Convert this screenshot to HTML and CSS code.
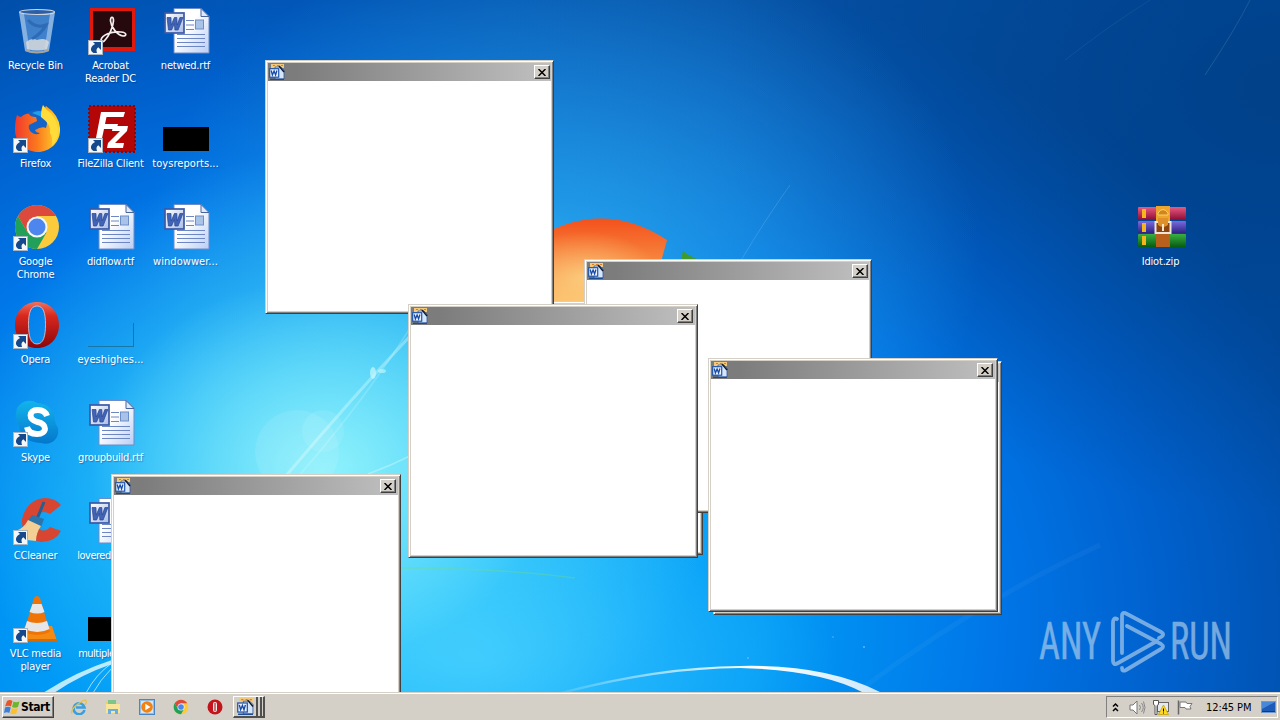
FILE: index.html
```html
<!DOCTYPE html>
<html lang="en">
<head>
    <meta charset="UTF-8">
    <meta name="viewport" content="width=device-width, initial-scale=1.0">
    <title>Desktop</title>
    <link rel="stylesheet" href="styles.css">
</head>
<body>
    <!-- shared icons -->
    <svg class="defs" width="0" height="0">
        <defs>
            <linearGradient id="paper" x1="0" y1="0" x2="1" y2="1">
                <stop offset="0.4" stop-color="#ffffff"/>
                <stop offset="1" stop-color="#b9cdf3"/>
            </linearGradient>
            <linearGradient id="wbox" x1="0" y1="0" x2="1" y2="1">
                <stop offset="0" stop-color="#ffffff"/>
                <stop offset="1" stop-color="#a9bde8"/>
            </linearGradient>
            <linearGradient id="operaRed" x1="0" y1="0" x2="0" y2="1">
                <stop offset="0" stop-color="#f0705c"/>
                <stop offset="0.3" stop-color="#d8281e"/>
                <stop offset="1" stop-color="#8c060a"/>
            </linearGradient>
        </defs>
        <symbol id="shortcut" viewBox="0 0 15 15">
            <rect x="0.5" y="0.5" width="14" height="14" fill="#f4f6f8" stroke="#a9b4c0"/>
            <path d="M5 2h8v8l-2.700-2.700c-1.800 1.200-2.300 2.900-1.300 5.700H5.500C1.500 10.500 2.500 6.500 7 4z" fill="#16498c"/>
        </symbol>
        <symbol id="word-doc" viewBox="0 0 48 48">
            <path d="M11 1.500h27l8 8V46H11z" fill="url(#paper)" stroke="#6d8ccb"/>
            <path d="M38 1.500v8h8z" fill="#dfe9fb" stroke="#4a659c"/>
            <path d="M23 13.500h8M23 18h8M23 22.500h8M14 27.500h28M14 31.500h28M14 35.500h28M14 39.500h28" stroke="#6c87c4" stroke-width="1.200"/>
            <rect x="32.500" y="13" width="8" height="9" fill="#a9c3e8" stroke="#6d8fc8"/>
            <rect x="2" y="6" width="19" height="20" fill="url(#wbox)" stroke="#3a59a6" stroke-width="1.700"/>
            <path d="M4 10.500h4l.2 7.500 3.200-7.500h2.400l.4 7.500 2.700-7.500h3l-4.800 12.500h-3.200l-.5-6.500-2.800 6.500H5.500z" fill="#4164b8" stroke="#27468f" stroke-width=".7"/>
        </symbol>
        <symbol id="word-small" viewBox="0 0 16 16">
            <path d="M2 0h13v4H2z" fill="#f3c878"/>
            <path d="M4 1.500h2M8 1.500h2M12 1.500h2" stroke="#e07c1a"/>
            <path d="M6 3h6l3 3v9H6z" fill="#d5e6fb" stroke="#33599f" stroke-width=".8"/>
            <path d="M10 2l5 6" stroke="#101828" stroke-width="1.400"/>
            <path d="M1 15.300h14" stroke="#1d4c93" stroke-width="1.400"/>
            <rect x="0.700" y="4.700" width="9" height="8.500" fill="#eef4ff" stroke="#2255a8" stroke-width="1.200"/>
            <path d="M2.200 6.500l1.200 4.500 1.700-4 1.500 4 1.300-4.500" fill="none" stroke="#164aa5" stroke-width="1.300"/>
        </symbol>
        <symbol id="chrome" viewBox="0 0 48 48">
            <circle cx="24" cy="24" r="22" fill="#fbcb3c"/>
            <path d="M4.950 13A22 22 0 0 1 43.050 13H24L14.500 29.500z" fill="#dc4a3d"/>
            <path d="M4.950 13A22 22 0 0 0 24 46L33.500 29.500 14.500 29.500z" fill="#21a05a"/>
            <circle cx="24" cy="24" r="10.500" fill="#f4f6f8"/>
            <circle cx="24" cy="24" r="8.500" fill="#4c86ee"/>
        </symbol>
        <symbol id="opera" viewBox="0 0 48 48">
            <path fill-rule="evenodd" d="M24 1C11 1 2 11 2 24s9 23 22 23 22-10 22-23S37 1 24 1zM24 5c6.500 0 8.500 7 8.500 18.500s-2 19.500-8.500 19.500-8.500-8-8.500-19.500 2-18.500 8.500-18.500z" fill="url(#operaRed)"/>
            <path d="M24 5c6.500 0 8.500 7 8.500 18.500s-2 19.500-8.500 19.500-8.500-8-8.500-19.500 2-18.500 8.500-18.500z" fill="none" stroke="#f3c9c4" stroke-width=".8"/>
        </symbol>
    </svg>

    <div class="desktop">
        <svg class="wallpaper" width="1280" height="720" viewBox="0 0 1280 720">
            <defs>
                <linearGradient id="flagRed" x1="0" y1="0" x2="0" y2="1">
                    <stop offset="0" stop-color="#f4511c"/>
                    <stop offset="0.450" stop-color="#f6803a"/>
                    <stop offset="1" stop-color="#fbb863"/>
                </linearGradient>
                <linearGradient id="wave" x1="0" y1="0" x2="1" y2="0">
                    <stop offset="0" stop-color="#fff" stop-opacity="0.100"/>
                    <stop offset="0.600" stop-color="#fff"/>
                    <stop offset="1" stop-color="#fff" stop-opacity="0.800"/>
                </linearGradient>
                <radialGradient id="flagGlow" cx="0.400" cy="0.700" r="0.550">
                    <stop offset="0" stop-color="#fff0a0" stop-opacity="0.550"/>
                    <stop offset="1" stop-color="#fff0a0" stop-opacity="0"/>
                </radialGradient>
            </defs>
            <path d="M530 242Q600 196 667 240L650 302H530z" fill="url(#flagRed)"/>
            <path d="M530 242Q600 196 667 240L650 302H530z" fill="url(#flagGlow)"/>
            <path d="M683 251q6 5 16 9h-18z" fill="#3f9b2f"/>
            <g fill="none" stroke="#e8ffff">
                <path d="M285 477Q350 400 412 334" stroke-width="3" opacity=".35"/>
                <path d="M298 477Q365 400 412 325" stroke-width="1.500" opacity=".2"/>
                <path d="M368 474Q390 466 412 455" stroke-width="1.500" opacity=".35"/>
                <path d="M740 262Q765 220 790 185" opacity=".14"/>
                <path d="M1205 75Q1235 30 1250 0" opacity=".12"/>
                <path d="M1065 60Q1110 25 1150 0" opacity=".06"/>
                <path d="M860 690Q980 600 1100 545" stroke-width="5" opacity=".04"/>
            </g>
            <circle cx="297" cy="452" r="42" fill="#fff" opacity=".09"/>
            <circle cx="323" cy="431" r="21" fill="#fff" opacity=".09"/>
            <ellipse cx="373" cy="373" rx="3" ry="6" fill="#c8f8ff" opacity=".7"/>
            <ellipse cx="382" cy="371" rx="4" ry="2" fill="#c8f8ff" opacity=".6"/>
            <path d="M400 568Q500 568 575 578" fill="none" stroke="#6fe07a" stroke-width="1.500" opacity=".35"/>
            <path d="M560 692Q660 666 740 666Q825 664 880 692H862Q820 670 740 668Q660 669 570 692z" fill="url(#wave)"/>
            <path d="M43 693Q75 672 112 660V664Q80 675 54 693z" fill="#e9fdff" opacity=".8"/>
            <path d="M86 693Q96 674 112 663M93 693Q100 680 112 668" fill="none" stroke="#d9fbff" opacity=".7"/>
            <circle cx="864" cy="647" r="1" fill="#5fb4ff"/>
            <circle cx="748" cy="658" r="1" fill="#5fb4ff"/>
            <circle cx="833" cy="637" r=".8" fill="#5fb4ff"/>
        </svg>

        <div class="icons">
            <div class="icon">
                <svg class="pic" viewBox="0 0 48 48">
                    <path d="M6 5h36l-6 38q-12 5-24 0z" fill="#7eaee4" fill-opacity=".5"/>
                    <path d="M6 5l6 39q3 1 5 1.500L11 7zM42 5l-6 39q-2 1-5 1.500L37 7z" fill="#dcecfa" fill-opacity=".45"/>
                    <path d="M13 35q6-5 11-2 8-3 12 2l-2 7q-9 3-20 0z" fill="#d9dbdc" fill-opacity=".85"/>
                    <path d="M15 13q8 9 18 5-4 8-14 14" fill="none" stroke="#205aa6" stroke-width="3" opacity=".55"/>
                    <ellipse cx="24" cy="5" rx="17.500" ry="2.500" fill="#2c5fa8" stroke="#d0d6dc" stroke-width="1.200"/>
                    <path d="M12 42q12 5 24 0v2q-12 5-24 0z" fill="#a7a49a"/>
                </svg>
                <span>Recycle Bin</span>
            </div>
            <div class="icon">
                <svg class="pic" viewBox="0 0 48 48">
                    <rect x="2" y="1" width="45" height="43" fill="#e2180d"/>
                    <rect x="5" y="4" width="39" height="36" fill="#26090c"/>
                    <path d="M13 33c1-5 10-9 20-8 6 .5 6 4 2 4-6-1-12-9-12.500-15-.2-5 3.200-5 3 0-.5 7-5 15-8 18.500-2 3-5 3.500-4.500.5z" fill="none" stroke="#f4eeee" stroke-width="1.700"/>
                </svg>
                <svg class="arrow"><use href="#shortcut"/></svg>
                <span>Acrobat<br>Reader DC</span>
            </div>
            <div class="icon">
                <svg class="pic"><use href="#word-doc"/></svg>
                <span>netwed.rtf</span>
            </div>

            <div class="icon">
                <svg class="pic" viewBox="0 0 48 48">
                    <defs>
                        <linearGradient id="fox" x1="0" y1="0" x2="1" y2="0">
                            <stop offset="0" stop-color="#f1392d"/>
                            <stop offset="0.500" stop-color="#fb7a1e"/>
                            <stop offset="1" stop-color="#fedb2f"/>
                        </linearGradient>
                    </defs>
                    <circle cx="24" cy="22" r="17" fill="#1463c8"/>
                    <path d="M19 8q8-4 13 0l1 6q-6-3-14-6z" fill="#20a0e8"/>
                    <path d="M4 10q2 2 4 2 5-4 8-3 1 3 7 3l1 4-8 4q-1 4 2 7 5 4 9 1-4 0-5-3 7-4 11-2 3-9-2-15 1-6 2-7 13 9 14 22c1 15-11 24-22 24S2 38 2 25Q2 16 4 10z" fill="url(#fox)"/>
                    <path d="M28 12q0-8 2-12 3 5 8 8 7 9 7 18 0 9-6 15 1-9-2-13 2-8-9-16z" fill="#ffdc3a"/>
                </svg>
                <svg class="arrow"><use href="#shortcut"/></svg>
                <span>Firefox</span>
            </div>
            <div class="icon">
                <svg class="pic" viewBox="0 0 48 48">
                    <rect x="1" y="1" width="46" height="46" fill="#b30606" stroke="#8c0508" stroke-width="2" stroke-dasharray="2 2"/>
                    <path d="M13 7h24l-1.500 5H18.500l-1.500 7h13l-1.500 5H16l-3 14H7z" fill="#fff"/>
                    <path d="M25 21h15l-1 5-12 12h9l-1 5H19l1-5 12-12h-8z" fill="#fff"/>
                </svg>
                <svg class="arrow"><use href="#shortcut"/></svg>
                <span>FileZilla Client</span>
            </div>
            <div class="icon">
                <div class="pic thumb"></div>
                <span class="long">toysreports...</span>
            </div>

            <div class="icon">
                <svg class="pic"><use href="#chrome"/></svg>
                <svg class="arrow"><use href="#shortcut"/></svg>
                <span>Google<br>Chrome</span>
            </div>
            <div class="icon">
                <svg class="pic"><use href="#word-doc"/></svg>
                <span>didflow.rtf</span>
            </div>
            <div class="icon">
                <svg class="pic"><use href="#word-doc"/></svg>
                <span class="long">windowwer...</span>
            </div>

            <div class="icon">
                <svg class="pic"><use href="#opera"/></svg>
                <svg class="arrow"><use href="#shortcut"/></svg>
                <span>Opera</span>
            </div>
            <div class="icon">
                <div class="pic thumb empty"></div>
                <span class="long">eyeshighes...</span>
            </div>
            <div class="icon blank"></div>

            <div class="icon">
                <svg class="pic" viewBox="0 0 48 48">
                    <defs>
                        <linearGradient id="skype" x1="0" y1="0" x2="0" y2="1">
                            <stop offset="0" stop-color="#12b4ec"/>
                            <stop offset="1" stop-color="#0477cc"/>
                        </linearGradient>
                    </defs>
                    <path d="M14 2q6-1 10 2 16 1 18 17 0 4 3 8c2 11-7 18-17 15Q8 43 6 27 1 18 4 9 8 3 14 2z" fill="url(#skype)"/>
                    <path d="M34 17q-2-6-9.500-6c-9 0-9.500 10 0 12 10 2 10 12-.500 12Q15.500 35 14 28" fill="none" stroke="#fff" stroke-width="6"/>
                </svg>
                <svg class="arrow"><use href="#shortcut"/></svg>
                <span>Skype</span>
            </div>
            <div class="icon">
                <svg class="pic"><use href="#word-doc"/></svg>
                <span>groupbuild.rtf</span>
            </div>
            <div class="icon blank"></div>

            <div class="icon">
                <svg class="pic" viewBox="0 0 48 48">
                    <path d="M48 8L37 17q-8-5-13 2-3 9 4 14 5 2 9-3l11 4Q42 45 28 45 8 40 9 22 14 2 32 1q10 0 16 7z" fill="#d84530"/>
                    <path d="M31 5L24 22" stroke="#245f94" stroke-width="3"/>
                    <path d="M19 18l12 4-3 8-13-6z" fill="#2b74ac"/>
                    <path d="M15 23l13 6q-5 7-5 15l-9-1-11-9Q11 31 15 23z" fill="#f3cf95"/>
                </svg>
                <svg class="arrow"><use href="#shortcut"/></svg>
                <span>CCleaner</span>
            </div>
            <div class="icon">
                <svg class="pic"><use href="#word-doc"/></svg>
                <span class="tight">loveredge.rtf</span>
            </div>
            <div class="icon blank"></div>

            <div class="icon">
                <svg class="pic" viewBox="0 0 48 48">
                    <path d="M12 31h27l5 15H8z" fill="#f58a12"/>
                    <path d="M8 44h36v2.500H8z" fill="#d66a04"/>
                    <path d="M21 3q3-4 6 0l10 34q-13 6-26 0z" fill="#ee7408"/>
                    <path d="M19.500 9h9l3 8q-7 3-15 0zM14 26q10 4 20 0l2.500 8q-12 6-25 0z" fill="#e6e6e8"/>
                </svg>
                <svg class="arrow"><use href="#shortcut"/></svg>
                <span>VLC media<br>player</span>
            </div>
            <div class="icon">
                <div class="pic thumb"></div>
                <span class="tight">multiplepa...</span>
            </div>
        </div>

        <div class="icon zip">
            <svg class="pic" viewBox="0 0 48 48">
                <defs>
                    <linearGradient id="bookR" x1="0" y1="0" x2="0" y2="1"><stop offset="0" stop-color="#e85a80"/><stop offset="1" stop-color="#8d0b34"/></linearGradient>
                    <linearGradient id="bookB" x1="0" y1="0" x2="0" y2="1"><stop offset="0" stop-color="#7a6ae0"/><stop offset="1" stop-color="#2e2484"/></linearGradient>
                    <linearGradient id="bookG" x1="0" y1="0" x2="0" y2="1"><stop offset="0" stop-color="#39b040"/><stop offset="1" stop-color="#075c12"/></linearGradient>
                </defs>
                <rect y="4" width="48" height="13" rx="1" fill="url(#bookR)"/>
                <rect y="18" width="48" height="12" rx="1" fill="url(#bookB)"/>
                <rect y="31" width="48" height="13" rx="1" fill="url(#bookG)"/>
                <path d="M4 6h4v9H4zM4 20h4v9H4zM4 33h4v9H4z" fill="#f5b51c"/>
                <rect x="18" y="3" width="14" height="41" fill="#b8601c"/>
                <path d="M18 3h14v15H18z" fill="#eda52c"/>
                <path d="M20 10q5-7 10 0v2H20z" fill="#d4841a" stroke="#fbd468"/>
                <rect x="17.500" y="19" width="15" height="11" fill="#8c4412" stroke="#ece5da" stroke-width="2"/>
                <path d="M20 15h10v7q-5 4-10 0z" fill="#e0902a"/>
                <path d="M25 21v7" stroke="#f5e6c8" stroke-width="2"/>
            </svg>
            <span>Idiot.zip</span>
        </div>

        <svg class="watermark" width="220" height="76" viewBox="0 0 220 76">
            <text x="3" y="54" textLength="62" lengthAdjust="spacingAndGlyphs">ANY</text>
            <g fill="none" stroke-width="3.800" stroke-linecap="round" stroke-linejoin="round">
                <path d="M81 14Q77 12 77 18V55Q77 61 82 58L121 36"/>
                <path d="M86 48V11Q86 6 91 9L125 27Q130 30 123 33"/>
                <path d="M91 21L125 39Q129 42 125 44L90 65Q86 67 86 63"/>
            </g>
            <text x="134" y="54" textLength="62" lengthAdjust="spacingAndGlyphs">RUN</text>
        </svg>

        <div class="window w1"><div class="titlebar"></div><div class="client"></div></div>
        <div class="window w2">
            <div class="titlebar"><svg class="wicon"><use href="#word-small"/></svg><button class="close"><svg viewBox="0 0 8 7"><path d="M.5 0l7 7M7.500 0l-7 7"/></svg></button></div>
            <div class="client"></div>
        </div>
        <div class="window w3">
            <div class="titlebar"><svg class="wicon"><use href="#word-small"/></svg><button class="close"><svg viewBox="0 0 8 7"><path d="M.5 0l7 7M7.500 0l-7 7"/></svg></button></div>
            <div class="client"></div>
        </div>
        <div class="window w4">
            <div class="titlebar"><svg class="wicon"><use href="#word-small"/></svg><button class="close"><svg viewBox="0 0 8 7"><path d="M.5 0l7 7M7.500 0l-7 7"/></svg></button></div>
            <div class="client"></div>
        </div>
        <div class="window w5"><div class="titlebar"></div><div class="client"></div></div>
        <div class="window w6">
            <div class="titlebar"><svg class="wicon"><use href="#word-small"/></svg><button class="close"><svg viewBox="0 0 8 7"><path d="M.5 0l7 7M7.500 0l-7 7"/></svg></button></div>
            <div class="client"></div>
        </div>
        <div class="window w7">
            <div class="titlebar"><svg class="wicon"><use href="#word-small"/></svg><button class="close"><svg viewBox="0 0 8 7"><path d="M.5 0l7 7M7.500 0l-7 7"/></svg></button></div>
            <div class="client"></div>
        </div>
    </div>

    <div class="taskbar">
        <button class="start">
            <svg width="16" height="16" viewBox="0 0 16 16">
                <path d="M3 2q3-2 5.500 0L7 7.500Q4 6 1 7.500z" fill="#e8552a"/>
                <path d="M9.500 2.500Q12 4 15.500 2.500L14 8Q11 9.500 8 8z" fill="#6cb52d"/>
                <path d="M1 8.500Q4 7 6.800 8.500L5.300 14Q3 12.500 0 14z" fill="#3a7fd8"/>
                <path d="M7.800 9Q10 10.500 13.700 9l-1.500 5.500Q9 16 6.300 14.500z" fill="#fbc02a"/>
            </svg>
            <span>Start</span>
        </button>
        <div class="quick">
            <svg viewBox="0 0 16 16">
                <path d="M13.500 11A5.500 5.500 0 1 1 13.500 8.500H5" fill="none" stroke="#3a9fe0" stroke-width="2.600"/>
                <path d="M1 14.500Q-1 11 7 5T15 2Q16 3 14 6" fill="none" stroke="#ecc040" stroke-width="1.300"/>
            </svg>
            <svg viewBox="0 0 16 16">
                <path d="M1 2h5l1 2h7v10H1z" fill="#f0cf6b"/>
                <path d="M3 1h8v4H3z" fill="#7fc58a"/>
                <path d="M1 5h14v9H1z" fill="#f9e59a"/>
                <path d="M3 15v-5h10v5h-3v-3H6v3z" fill="#69aee0"/>
            </svg>
            <svg viewBox="0 0 16 16">
                <rect x=".5" y=".5" width="15" height="15" fill="#8fbfe8" stroke="#4b86c4"/>
                <rect x="2" y="2" width="12" height="12" fill="#d3e6f6"/>
                <circle cx="8" cy="8" r="5.800" fill="#f28211"/>
                <path d="M6.300 4.800L11.500 8l-5.200 3.200z" fill="#fff"/>
            </svg>
            <svg viewBox="0 0 48 48"><use href="#chrome"/></svg>
            <svg viewBox="0 0 16 16">
                <circle cx="8" cy="8" r="7.500" fill="#c3131c"/>
                <rect x="6" y="3" width="4" height="10" rx="2" fill="#f6e8e6"/>
                <path d="M8 4v8" stroke="#8c0a10"/>
            </svg>
        </div>
        <div class="task">
            <svg width="17" height="17"><use href="#word-small"/></svg>
            <i></i><i></i>
        </div>
        <div class="tray">
            <svg width="7" height="11" viewBox="0 0 7 11"><path d="M1 4.500l2.500-2.500L6 4.500M1 9l2.500-2.500L6 9" fill="none" stroke="#000" stroke-width="1.500"/></svg>
            <svg class="speaker" width="17" height="15" viewBox="0 0 17 15">
                <path d="M1 5h3l4-4v13l-4-4H1z" fill="#fff" stroke="#777"/>
                <path d="M10.500 5q2 2.500 0 5M12.500 3q3.500 4.500 0 9M14.500 1.500q3 6 0 12" fill="none" stroke="#888"/>
            </svg>
            <svg class="network" width="16" height="15" viewBox="0 0 16 15">
                <rect x="4.500" y="2.500" width="11" height="9" fill="#e4e9ed" stroke="#666"/>
                <path d="M.5.500h5v4l-1.500 1v9H2v-9l-1.500-1z" fill="#fff" stroke="#555"/>
                <path d="M10.500 5l5 9.500h-10z" fill="#ffd91c" stroke="#c09a00" stroke-width=".7"/>
                <path d="M10.500 8.500v3M10.500 12.500v1" stroke="#000"/>
            </svg>
            <svg class="flag" width="16" height="15" viewBox="0 0 16 15">
                <path d="M1.500.500v14" stroke="#666" stroke-width="1.500"/>
                <path d="M3 2h6l1 1.500h5l-2 3 1 2.500H9L8 7.500H3z" fill="#fff" stroke="#777"/>
            </svg>
            <span class="clock">12:45 PM</span>
            <svg class="peek" width="15" height="12" viewBox="0 0 15 12">
                <rect x=".5" y=".5" width="14" height="11" fill="#1e5bb8" stroke="#6f9ad0"/>
                <path d="M1 1h13L1 8z" fill="#4888d8"/>
                <path d="M1 10.500h13" stroke="#123a78"/>
            </svg>
        </div>
    </div>
</body>
</html>
```
FILE: styles.css
```css
body, html {
    margin: 0;
    padding: 0;
    height: 100%;
}

body {
    width: 1280px;
    height: 720px;
    overflow: hidden;
    display: flex;
    flex-direction: column;
    font-family: "DejaVu Sans Condensed", "DejaVu Sans", sans-serif;
    font-stretch: condensed;
    font-size: 11px;
}

.defs {
    position: absolute;
}

.desktop {
    position: relative;
    height: 692px;
    overflow: hidden;
    background:
        radial-gradient(ellipse 230px 190px at 320px 470px, rgba(165, 250, 252, 0.75), rgba(120, 235, 252, 0) 100%),
        radial-gradient(ellipse 380px 320px at 340px 470px, rgba(90, 225, 250, 0.85), rgba(40, 190, 245, 0) 100%),
        radial-gradient(ellipse 360px 200px at 480px 660px, rgba(70, 205, 255, 0.8), rgba(40, 180, 255, 0) 100%),
        radial-gradient(ellipse 420px 330px at 560px 260px, rgba(50, 175, 235, 0.75), rgba(30, 150, 230, 0) 100%),
        radial-gradient(ellipse 560px 420px at 1280px 90px, rgba(0, 60, 125, 0.7), rgba(0, 65, 140, 0) 100%),
        radial-gradient(ellipse 520px 300px at 700px 0px, rgba(10, 85, 165, 0.55), rgba(10, 90, 170, 0) 100%),
        radial-gradient(ellipse 960px 700px at 400px 620px, #00a8fc 0%, #009af6 38%, #0076e8 62%, #0060cc 80%, #004ca4 100%);
}

.wallpaper {
    position: absolute;
    left: 0;
    top: 0;
}

/* desktop icons */
.icons {
    position: relative;
    display: grid;
    grid-template-columns: repeat(3, 75px);
    grid-auto-rows: 98px;
    margin-left: -1px;
    width: 225px;
}

.icon {
    position: relative;
    display: flex;
    flex-direction: column;
    align-items: center;
    padding-top: 7px;
    box-sizing: border-box;
    width: 75px;
    color: white;
    line-height: 13px;
    text-align: center;
    white-space: nowrap;
    text-shadow: 1px 1px 1px rgba(0, 30, 90, 0.35);
}

.icon span {
    margin-top: 4px;
    margin-left: -2px;
    letter-spacing: -0.2px;
}

.icon .long {
    letter-spacing: 0.05px;
}

.icon .tight {
    margin-left: -11px;
    letter-spacing: -0.5px;
}

.pic {
    width: 48px;
    height: 48px;
    flex-shrink: 0;
}

.arrow {
    position: absolute;
    left: 14px;
    top: 40px;
    width: 15px;
    height: 15px;
}

.thumb {
    width: 46px;
    height: 24px;
    margin: 22px 2px 2px 0;
    background: black;
}

.thumb.empty {
    box-sizing: border-box;
    background: none;
    border-right: 1px solid #1676a8;
    border-bottom: 1px solid #1676a8;
}

.zip {
    position: absolute;
    left: 1124px;
    top: 196px;
}

.watermark {
    position: absolute;
    left: 1036px;
    top: 605px;
    opacity: 0.65;
    stroke: #b4d2ee;
}

.watermark text {
    font-family: Roboto, sans-serif;
    font-size: 51px;
    font-weight: 400;
    fill: #b4d2ee;
    stroke: #b4d2ee;
    stroke-width: 0.5;
}

/* windows */
.window {
    position: absolute;
    display: flex;
    flex-direction: column;
    box-sizing: border-box;
    width: 290px;
    height: 254px;
    padding: 1px;
    background: #d4d0c8;
    border: 1px solid #d4d0c8;
    border-right-color: #404040;
    border-bottom-color: #404040;
    box-shadow: inset 1px 1px white, inset -1px -1px #808080;
}

.titlebar {
    display: flex;
    align-items: center;
    justify-content: space-between;
    height: 18px;
    margin: 1px 1px 0;
    padding: 0 2px 0 1px;
    background: linear-gradient(to right, #7c7c7c 10%, #c0c0c0);
}

.wicon {
    width: 16px;
    height: 16px;
}

.close {
    display: flex;
    align-items: center;
    justify-content: center;
    width: 16px;
    height: 14px;
    padding: 0 1px 0 0;
    background: #d4d0c8;
    border: 1px solid white;
    border-right-color: #404040;
    border-bottom-color: #404040;
    box-shadow: inset -1px -1px #808080;
}

.close svg {
    width: 8px;
    height: 7px;
    stroke: black;
    stroke-width: 1.5;
}

.client {
    flex: 1;
    margin: 0 1px 1px;
    background: white;
}

.w1 { left: 413px; top: 301px; }
.w2 { left: 265px; top: 60px; width: 289px; }
.w3 { left: 584px; top: 259px; width: 288px; }
.w4 { left: 408px; top: 304px; }
.w5 { left: 713px; top: 361px; width: 289px; }
.w6 { left: 708px; top: 358px; }
.w7 { left: 111px; top: 474px; }

.w2 .titlebar,
.w3 .titlebar {
    padding-right: 1px;
}

/* taskbar */
.taskbar {
    display: flex;
    align-items: center;
    box-sizing: border-box;
    height: 28px;
    padding: 2px 2px 1px 2px;
    background: #d4d0c8;
    border-top: 1px solid #d4d0c8;
    box-shadow: inset 0 1px white;
}

.start {
    display: flex;
    align-items: center;
    gap: 1px;
    width: 52px;
    height: 22px;
    padding: 0 0 0 1px;
    font-family: inherit;
    font-size: 12px;
    font-weight: bold;
    font-stretch: condensed;
    letter-spacing: -0.4px;
    background: #d4d0c8;
    border: 1px solid white;
    border-right-color: #404040;
    border-bottom-color: #404040;
    box-shadow: inset -1px -1px #808080;
}

.start svg {
    flex-shrink: 0;
}

.quick {
    display: flex;
    gap: 18px;
    margin-left: 17px;
}

.quick svg {
    width: 16px;
    height: 16px;
}

.task {
    display: flex;
    align-items: center;
    box-sizing: border-box;
    height: 22px;
    width: 32px;
    margin-left: 10px;
    padding-left: 3px;
    border: 1px solid white;
    border-right: 2px solid #505050;
    border-bottom: 2px solid #505050;
}

.task svg {
    flex-shrink: 0;
}

.task i {
    flex-shrink: 0;
    height: 20px;
    width: 1px;
    margin-left: 1px;
    border-right: 2px solid #505050;
}

.tray {
    display: flex;
    align-items: center;
    box-sizing: border-box;
    width: 172px;
    height: 22px;
    margin-left: auto;
    padding-left: 5px;
    border: 1px solid #808080;
    border-right-color: white;
    border-bottom-color: white;
}

.speaker {
    margin-left: 10px;
}

.network {
    margin-left: 7px;
}

.flag {
    margin-left: 8px;
}

.clock {
    margin-left: 13px;
    width: 47px;
    white-space: nowrap;
    letter-spacing: -0.1px;
}

.peek {
    margin-left: 8px;
}
```
